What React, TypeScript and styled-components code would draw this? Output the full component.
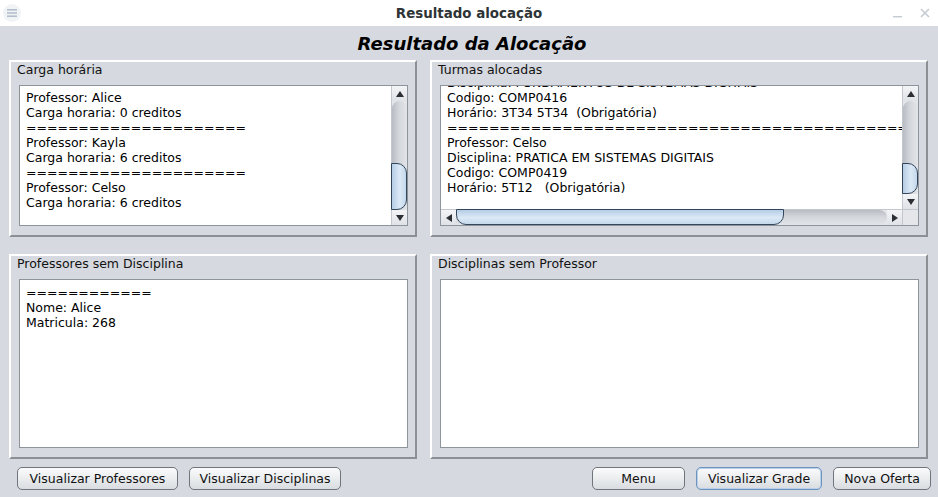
import React from 'react';
import styled, { createGlobalStyle } from 'styled-components';

const GlobalStyle = createGlobalStyle`
  * { box-sizing: border-box; }
  html, body { margin: 0; padding: 0; }
  body {
    background: #d6d9df;
    font-family: 'DejaVu Sans', 'Liberation Sans', sans-serif;
    color: #000;
  }
`;

const cargaHoraria = [
  'Professor: Alice',
  'Carga horaria: 0 creditos',
  '='.repeat(21),
  'Professor: Kayla',
  'Carga horaria: 6 creditos',
  '='.repeat(21),
  'Professor: Celso',
  'Carga horaria: 6 creditos',
];

const turmas = [
  'Disciplina: FUNDAMENTOS DE SISTEMAS DIGITAIS',
  'Codigo: COMP0416',
  'Horário: 3T34 5T34  (Obrigatória)',
  '='.repeat(44),
  'Professor: Celso',
  'Disciplina: PRATICA EM SISTEMAS DIGITAIS',
  'Codigo: COMP0419',
  'Horário: 5T12   (Obrigatória)',
];

const semDisciplina = ['='.repeat(12), 'Nome: Alice', 'Matricula: 268'];

type Dir = 'up' | 'down' | 'left' | 'right';

function Arrow({ dir }: { dir: Dir }) {
  const pts: Record<Dir, string> = {
    up: '0,6 4,0 8,6',
    down: '0,0 8,0 4,6',
    left: '6,0 6,8 0,4',
    right: '0,0 0,8 6,4',
  };
  const vertical = dir === 'up' || dir === 'down';
  return (
    <svg width={vertical ? 8 : 6} height={vertical ? 6 : 8} viewBox={vertical ? '0 0 8 6' : '0 0 6 8'}>
      <polygon points={pts[dir]} fill="#2b2e33" />
    </svg>
  );
}

function VScrollBar({ start, size }: { start: number; size: number }) {
  return (
    <VBar>
      <ArrowBtn>
        <Arrow dir="up" />
      </ArrowBtn>
      <VTrack>
        <VThumb style={{ top: `${start}%`, height: `${size}%` }} />
      </VTrack>
      <ArrowBtn>
        <Arrow dir="down" />
      </ArrowBtn>
    </VBar>
  );
}

function HScrollBar({ start, size }: { start: number; size: number }) {
  return (
    <HBar>
      <ArrowBtn>
        <Arrow dir="left" />
      </ArrowBtn>
      <HTrack>
        <HThumb style={{ left: `${start}%`, width: `${size}%` }} />
      </HTrack>
      <ArrowBtn>
        <Arrow dir="right" />
      </ArrowBtn>
    </HBar>
  );
}

export default function App() {
  return (
    <>
      <GlobalStyle />
      <Window>
        <TitleBar>
          <TitleLeft>
            <svg width="18" height="18" viewBox="0 0 18 18">
              <circle cx="9" cy="9" r="9" fill="#f1f4f6" />
              <rect x="4" y="5" width="10" height="1.6" fill="#b3c0cb" />
              <rect x="4" y="8.2" width="10" height="1.6" fill="#b3c0cb" />
              <rect x="4" y="11.4" width="10" height="1.6" fill="#b3c0cb" />
            </svg>
          </TitleLeft>
          <TitleText>Resultado alocação</TitleText>
          <TitleRight>
            <svg width="10" height="10" viewBox="0 0 10 10">
              <rect x="0" y="8" width="9" height="1.4" fill="#c4cbd2" />
            </svg>
            <svg width="10" height="10" viewBox="0 0 10 10">
              <path d="M1 1 L9 9 M9 1 L1 9" stroke="#c4cbd2" strokeWidth="1.6" />
            </svg>
          </TitleRight>
        </TitleBar>

        <Heading>Resultado da Alocação</Heading>

        <PanelGrid>
          <Panel>
            <PanelTitle>Carga horária</PanelTitle>
            <TextBox $v>
              <TextContent>
                <Lines>{cargaHoraria.join('\n')}</Lines>
              </TextContent>
              <VScrollBar start={57} size={43} />
            </TextBox>
          </Panel>

          <Panel>
            <PanelTitle>Turmas alocadas</PanelTitle>
            <TextBox $v $h>
              <TextContent>
                <Lines $offset={-15}>{turmas.join('\n')}</Lines>
              </TextContent>
              <VScrollBar start={67} size={33} />
              <HScrollBar start={0} size={76} />
              <Corner />
            </TextBox>
          </Panel>

          <Panel>
            <PanelTitle>Professores sem Disciplina</PanelTitle>
            <TextBox>
              <TextContent>
                <Lines $offset={1}>{semDisciplina.join('\n')}</Lines>
              </TextContent>
            </TextBox>
          </Panel>

          <Panel>
            <PanelTitle>Disciplinas sem Professor</PanelTitle>
            <TextBox>
              <TextContent />
            </TextBox>
          </Panel>
        </PanelGrid>

        <ButtonRow>
          <ButtonGroup>
            <Button $w={161}>Visualizar Professores</Button>
            <Button $w={152}>Visualizar Disciplinas</Button>
          </ButtonGroup>
          <ButtonGroup>
            <Button $w={93}>Menu</Button>
            <Button $w={126} $focused>
              Visualizar Grade
            </Button>
            <Button $w={98}>Nova Oferta</Button>
          </ButtonGroup>
        </ButtonRow>
      </Window>
    </>
  );
}

const Window = styled.div`
  width: 938px;
  height: 497px;
  display: flex;
  flex-direction: column;
  background: #d6d9df;
  overflow: hidden;
`;

const TitleBar = styled.div`
  height: 26px;
  flex: none;
  background: #ffffff;
  display: grid;
  grid-template-columns: 1fr auto 1fr;
  align-items: center;
`;

const TitleLeft = styled.div`
  display: flex;
  align-items: center;
  padding-left: 3px;
`;

const TitleRight = styled.div`
  display: flex;
  justify-content: flex-end;
  align-items: center;
  gap: 17px;
  padding-right: 8px;
`;

const TitleText = styled.div`
  font-weight: bold;
  font-size: 13.4px;
  color: #2e3436;
`;

const Heading = styled.h1`
  margin: 0;
  height: 34px;
  flex: none;
  display: flex;
  align-items: center;
  justify-content: center;
  padding-left: 6px;
  font-size: 18px;
  font-weight: bold;
  font-style: italic;
  color: #000;
`;

const PanelGrid = styled.div`
  display: grid;
  grid-template-columns: 408px 498px;
  grid-template-rows: 177px 205px;
  column-gap: 13px;
  row-gap: 17px;
  padding-left: 9px;
`;

const Panel = styled.section`
  display: flex;
  flex-direction: column;
  min-height: 0;
  border: 2px solid;
  border-color: #ffffff #8c8f94 #8c8f94 #ffffff;
  padding: 0 7px 9px 6px;
`;

const PanelTitle = styled.div`
  font-size: 12.5px;
  line-height: 15px;
  margin-bottom: 8px;
  color: #111;
`;

const TextBox = styled.div<{ $v?: boolean; $h?: boolean }>`
  flex: 1;
  min-height: 0;
  margin-left: 2px;
  background: #ffffff;
  border: 1px solid #8e949c;
  display: grid;
  grid-template-columns: ${(p) => (p.$v ? '1fr 16px' : '1fr')};
  grid-template-rows: ${(p) => (p.$h ? '1fr 16px' : '1fr')};
  overflow: hidden;
`;

const TextContent = styled.div`
  min-width: 0;
  min-height: 0;
  overflow: hidden;
  padding: 4px 6px 0 6px;
`;

const Lines = styled.div<{ $offset?: number }>`
  margin-top: ${(p) => p.$offset ?? 0}px;
  white-space: pre;
  font-size: 12.5px;
  line-height: 15px;
  color: #000;
`;

const VBar = styled.div`
  display: flex;
  flex-direction: column;
  background: #e4e6ea;
  border-left: 1px solid #c3c7cd;
`;

const HBar = styled.div`
  display: flex;
  flex-direction: row;
  background: #e4e6ea;
  border-top: 1px solid #c3c7cd;
`;

const ArrowBtn = styled.div`
  flex: none;
  width: 15px;
  height: 15px;
  display: flex;
  align-items: center;
  justify-content: center;
  background: linear-gradient(#f3f4f6, #dfe2e6);
`;

const VTrack = styled.div`
  position: relative;
  flex: 1;
  background: linear-gradient(to right, #b8bcc3, #d3d6db 45%, #e2e4e8);
  border-radius: 8px 8px 0 0;
`;

const HTrack = styled.div`
  position: relative;
  flex: 1;
  background: linear-gradient(#b8bcc3, #d3d6db 45%, #e2e4e8);
  border-radius: 0 8px 8px 0;
`;

const VThumb = styled.div`
  position: absolute;
  left: -1px;
  right: 0;
  border: 1px solid #33465b;
  border-radius: 0 10px 10px 0;
  background: linear-gradient(to right, #b6cde5, #dce9f6 55%, #c4d8ec);
`;

const HThumb = styled.div`
  position: absolute;
  top: -1px;
  bottom: 0;
  border: 1px solid #33465b;
  border-radius: 0 0 10px 10px;
  background: linear-gradient(#b6cde5, #dce9f6 55%, #c4d8ec);
`;

const Corner = styled.div`
  background: #e4e6ea;
  border-top: 1px solid #c3c7cd;
  border-left: 1px solid #c3c7cd;
`;

const ButtonRow = styled.div`
  display: flex;
  justify-content: space-between;
  align-items: center;
  padding: 0 7px 0 17px;
  margin-top: 8px;
`;

const ButtonGroup = styled.div`
  display: flex;
  gap: 11px;
`;

const Button = styled.button<{ $w: number; $focused?: boolean }>`
  width: ${(p) => p.$w}px;
  height: 23px;
  padding: 0;
  border-radius: 5px;
  border: 1px solid ${(p) => (p.$focused ? '#6b93c0' : '#70757c')};
  box-shadow: ${(p) => (p.$focused ? 'inset 0 0 0 1px #b9d0e8' : 'none')};
  background: linear-gradient(#fbfbfc, #eceef0 45%, #d9dce0);
  font-family: 'DejaVu Sans', 'Liberation Sans', sans-serif;
  font-size: 12.5px;
  color: #111;
`;
